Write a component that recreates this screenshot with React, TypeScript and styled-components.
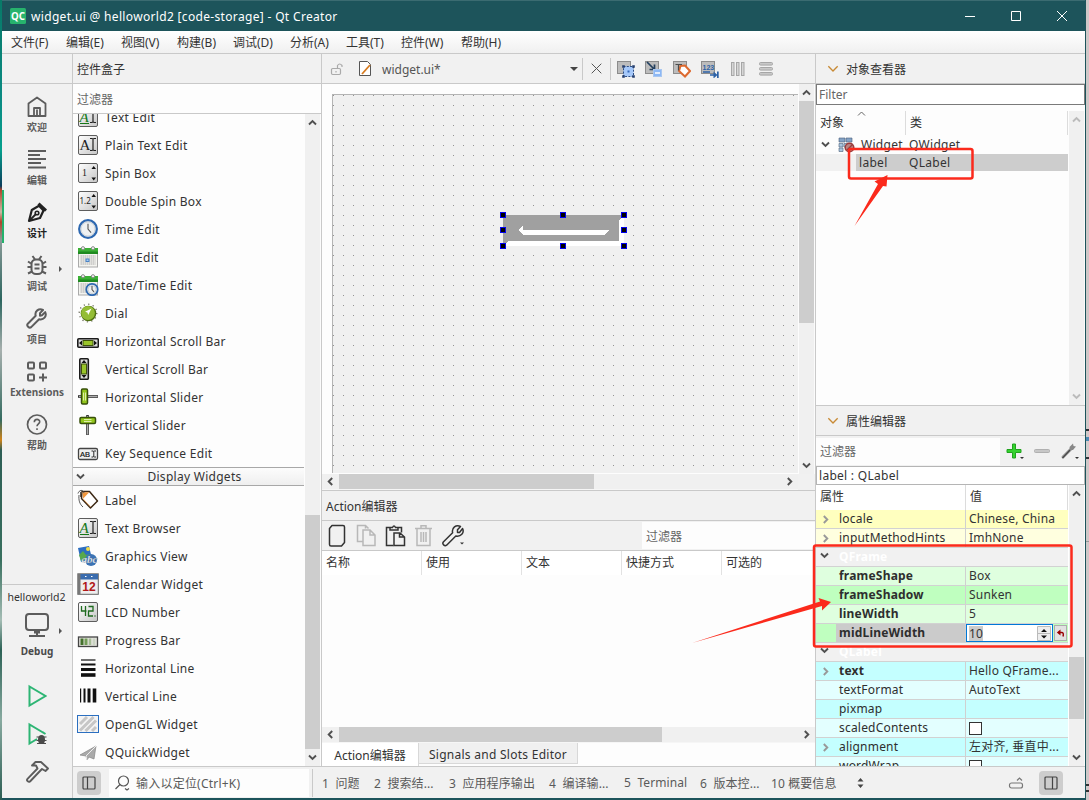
import React from "react";
import styled, { createGlobalStyle, css } from "styled-components";

const line = "#c9c9c9";
const panel = "#f1f1f1";
const paper = "#fdfdfd";

const Global = createGlobalStyle`
  * { box-sizing: border-box; }
  body { margin: 0; }
  body, input, button {
    font-family: "Noto Sans", "Noto Sans CJK SC", sans-serif;
    font-size: 12px;
    color: #333;
  }
  svg { display: block; flex: none; }
`;

const Desktop = styled.div`
  position: relative;
  width: 1089px;
  height: 800px;
  overflow: hidden;
  display: flex;
  white-space: pre;
  background: #c9c4c4;
`;
const DesktopLeft = styled.div`
  width: 2px;
  background: linear-gradient(#087a68 0, #0b8b83 100px, #06a08d 150px, #0b3d5c 186px, #b1442b 190px, #cbb9a4 212px, #b1442b 222px, #8a9a98 240px, #2c665f 300px, #a7b0ae 350px, #356b60 420px, #d18419 440px, #2d5e55 450px, #39705f 560px, #a5bdb5 620px, #2d6256 650px, #88aaa0 720px, #2c5d53 100%);
`;
const DesktopRight = styled.div`
  width: 3px;
  background: linear-gradient(#cfc8c8 0 429px, #2b3136 429px 431px, #cfc8c8 431px 437px, #4d8ab4 437px 441px, #d2cccc 441px 457px, #34363a 457px 459px, #cfc8c8 459px 541px, #999 541px 542px, #cfc8c8 542px 784px, #333 784px 786px, #cfc8c8 786px 790px, #333 790px 792px, #cfc8c8 792px);
`;
const Window = styled.div`
  width: 1084px;
  height: 800px;
  display: flex;
  flex-direction: column;
  background: ${panel};
  border-right: 1px solid #1d545b;
  border-bottom: 2px solid #1d545b;
`;
const TitleBar = styled.header`
  height: 31px;
  flex: none;
  background: #1d545b;
  border-top: 1px solid #3b6b71;
  color: #fff;
  display: flex;
  align-items: center;
  padding-left: 8px;
`;
const Title = styled.span`
  flex: 1;
  margin-left: 5px;
  font-size: 12px;
  letter-spacing: 0.33px;
`;
const WinButton = styled.span`
  width: 46px;
  display: flex;
  justify-content: center;
`;
const MenuBar = styled.nav`
  height: 23px;
  flex: none;
  display: flex;
  align-items: center;
  padding-left: 9px;
  background: linear-gradient(#fff, #f0f0f0);
  border-bottom: 1px solid ${line};
`;
const MenuItem = styled.span<{ $w: number }>`
  width: ${p => p.$w}px;
`;
const Body = styled.div`
  flex: 1;
  min-height: 0;
  display: flex;
`;
const ModeBar = styled.aside`
  width: 71px;
  flex: none;
  border-right: 1px solid ${line};
  display: flex;
  flex-direction: column;
`;
const ModeTop = styled.div`
  height: 30px;
  border-bottom: 1px solid ${line};
`;
const Mode = styled.div<{ $on?: boolean }>`
  position: relative;
  height: 53px;
  display: flex;
  flex-direction: column;
  align-items: center;
  padding-top: 11px;
  font-size: 10px;
  font-weight: 700;
  line-height: 14px;
  color: ${p => (p.$on ? "#222" : "#5c5c5c")};
  border-left: 2px solid ${p => (p.$on ? "#23b26d" : "transparent")};
  padding-right: 2px;
  svg { margin-bottom: 2px; }
`;
const ModeArrow = styled.i`
  position: absolute;
  right: 10px;
  top: 23px;
  border: 3.5px solid transparent;
  border-left-color: #555;
  border-right: 0;
`;
const Kit = styled.div`
  margin-top: auto;
  height: 214px;
  border-top: 1px solid ${line};
  display: flex;
  flex-direction: column;
  align-items: center;
  padding-top: 4px;
`;
const KitName = styled.div`
  font-size: 10.5px;
  line-height: 16px;
  padding-right: 1px;
`;
const KitTarget = styled.div`
  position: relative;
  width: 100%;
  height: 60px;
  display: flex;
  flex-direction: column;
  align-items: center;
  padding-top: 7px;
  font-size: 10px;
  font-weight: 700;
  line-height: 14px;
  color: #4a4a4a;
  svg { margin-bottom: 6px; }
`;
const KitActions = styled.div`
  display: flex;
  flex-direction: column;
  align-items: center;
  gap: 14px;
  padding-top: 19px;
`;
const Right = styled.div`
  flex: 1;
  min-width: 0;
  display: flex;
  flex-direction: column;
`;
const Docks = styled.div`
  height: 713px;
  flex: none;
  display: flex;
`;
const LeftDock = styled.section`
  width: 249px;
  display: flex;
  flex-direction: column;
  border-right: 1px solid ${line};
`;
const DockTitle = styled.div<{ $pad?: number }>`
  height: 30px;
  flex: none;
  border-bottom: 1px solid ${line};
  padding-left: ${p => p.$pad ?? 4}px;
  display: flex;
  align-items: center;
  gap: 7px;
`;
const FilterField = styled.div<{ $w?: number; $h: number }>`
  width: ${p => (p.$w ? p.$w + "px" : "auto")};
  height: ${p => p.$h}px;
  flex: none;
  background: ${paper};
  color: #666;
  display: flex;
  align-items: center;
  padding-left: 4px;
`;
const BoxArea = styled.div`
  flex: 1;
  min-height: 0;
  display: flex;
  border-top: 1px solid ${line};
  border-bottom: 1px solid ${line};
  background: ${panel};
`;
const BoxList = styled.div`
  width: 232px;
  overflow: hidden;
  background: ${paper};
`;
const Group = styled.div<{ $up?: number }>`
  margin-top: ${p => -(p.$up ?? 0)}px;
`;
const WidgetRow = styled.div`
  height: 28px;
  display: flex;
  align-items: center;
  padding-left: 4px;
  gap: 6px;
  letter-spacing: 0.28px;
`;
const IconCell = styled.span`
  width: 22px;
  height: 22px;
`;
const Category = styled.div`
  height: 19px;
  width: 231px;
  border-top: 1px solid #a8a8a8;
  border-bottom: 1px solid #a8a8a8;
  background: linear-gradient(#fcfcfc, #efefef);
  display: flex;
  align-items: center;
  padding-left: 3px;
  letter-spacing: 0.28px;
  span { flex: 1; text-align: center; }
`;
const VBar = styled.div`
  width: 16px;
  flex: none;
  display: flex;
  flex-direction: column;
  align-items: center;
  background: #f0f0f0;
  border-right: 1px solid #fbfbfb;
`;
const HBar = styled.div`
  height: 16px;
  flex: none;
  display: flex;
  align-items: center;
  background: #f0f0f0;
  border-bottom: 1px solid #f6f6f6;
`;
const Cap = styled.span`
  width: 17px;
  height: 17px;
  flex: none;
  display: flex;
  align-items: center;
  justify-content: center;
`;
const Track = styled.div<{ $before: number; $size: number; $h?: boolean }>`
  flex: 1;
  align-self: stretch;
  &::before {
    content: "";
    display: block;
    background: #cdcdcd;
    ${p => p.$h
      ? css`margin-left: ${p.$before}px; width: ${p.$size}px; height: 15px;`
      : css`margin-top: ${p.$before}px; height: ${p.$size}px;`}
  }
`;
const Center = styled.section`
  width: 494px;
  display: flex;
  flex-direction: column;
  border-right: 1px solid ${line};
`;
const EditorBar = styled.div`
  height: 30px;
  flex: none;
  border-bottom: 1px solid ${line};
  display: flex;
  align-items: center;
  padding-left: 7px;
`;
const FileName = styled.span`
  flex: 1;
  margin-left: 9px;
  padding-top: 1px;
  color: #555;
`;
const Down = styled.i`
  border: 4px solid transparent;
  border-top-color: #444;
  border-bottom: 0;
  margin-right: 4px;
`;
const Sep = styled.i`
  width: 1px;
  height: 22px;
  background: ${line};
`;
const CloseCell = styled.span`
  width: 27px;
  display: flex;
  justify-content: center;
`;
const DesignTools = styled.div`
  display: flex;
  gap: 10px;
  padding: 0 40px 0 6px;
`;
const CanvasRow = styled.div`
  height: 390px;
  flex: none;
  display: flex;
  background: ${paper};
`;
const FormArea = styled.div`
  width: 477px;
  height: 389px;
  padding: 10px 1px 0 10px;
`;
const Form = styled.div`
  position: relative;
  height: 379px;
  border-top: 1px solid #b4b4b4;
  border-left: 1px solid #b4b4b4;
  background: radial-gradient(circle at 0.5px 0.5px, #949494 0.6px, transparent 0.7px) 0 0 / 10px 10px #f0f0f0;
`;
const SelectedLabel = styled.div`
  position: absolute;
  left: 170px;
  top: 120px;
`;
const Handle = styled.i<{ $x: number; $y: number }>`
  position: absolute;
  left: ${p => p.$x}px;
  top: ${p => p.$y}px;
  width: 6px;
  height: 6px;
  background: #000;
  border: 1px solid #0000f0;
`;
const HBarRow = styled.div`
  display: flex;
  width: 476px;
  flex: none;
  flex-direction: column;
`;
const ActionTitle = styled(DockTitle)`
  border-top: 1px solid ${line};
  height: 31px;
`;
const ActionTools = styled.div`
  height: 30px;
  flex: none;
  border-bottom: 1px solid ${line};
  display: flex;
  align-items: center;
  justify-content: space-between;
`;
const ActionIcons = styled.div`
  display: flex;
  gap: 5px;
  padding-left: 4px;
`;
const Columns = styled.div`
  height: 24px;
  flex: none;
  display: flex;
  background: #fff;
`;
const Column = styled.span<{ $w: number }>`
  width: ${p => p.$w}px;
  padding-left: 4px;
  line-height: 23px;
  border-right: 1px solid #e2e2e2;
  &:last-child { border-right: 0; }
`;
const Blank = styled.div`
  flex: 1;
  background: ${paper};
`;
const Tabs = styled.div`
  height: 24px;
  flex: none;
  display: flex;
  border-bottom: 1px solid ${line};
  background: ${paper};
`;
const Tab = styled.span<{ $on?: boolean; $w: number }>`
  width: ${p => p.$w}px;
  height: ${p => (p.$on ? 23 : 21)}px;
  line-height: ${p => (p.$on ? 25 : 23)}px;
  text-align: center;
  letter-spacing: ${p => (p.$on ? 0 : 0.27)}px;
  background: ${p => (p.$on ? "#fff" : "#f0f0f0")};
  border-right: 1px solid #d8d8d8;
  border-bottom: ${p => (p.$on ? "0" : "1px solid #d8d8d8")};
`;
const RightDock = styled.section`
  width: 269px;
  display: flex;
  flex-direction: column;
  border-bottom: 1px solid ${line};
`;
const Outlined = styled.div<{ $c: string; $h: number; $hint?: boolean }>`
  height: ${p => p.$h}px;
  flex: none;
  border: 1px solid ${p => p.$c};
  background: #fff;
  color: ${p => (p.$hint ? "#666" : "#333")};
  padding-left: 2px;
  display: flex;
  align-items: center;
  letter-spacing: ${p => (p.$hint ? 0 : 0.28)}px;
`;
const Tree = styled.div`
  height: 301px;
  flex: none;
  display: flex;
  padding-top: 6px;
  background: ${paper};
  border-bottom: 1px solid ${line};
`;
const TreeBody = styled.div`
  width: 253px;
`;
const TreeHead = styled.div`
  position: relative;
  height: 24px;
  display: flex;
  line-height: 24px;
  svg { position: absolute; left: 41px; top: -2px; }
`;
const TreeCell = styled.span<{ $w: number; $rule?: boolean }>`
  width: ${p => p.$w}px;
  padding-left: 4px;
  border-right: 1px solid ${p => (p.$rule ? "#dcdcdc" : "transparent")};
`;
const TreeRow = styled.div<{ $h: number; $on?: boolean }>`
  height: ${p => p.$h}px;
  width: 252px;
  display: flex;
  align-items: center;
  padding-left: ${p => (p.$on ? 43 : 5)}px;
  letter-spacing: 0.3px;
  background: ${p => (p.$on ? "linear-gradient(90deg, #f1f1f1 40px, #cdcdcd 40px)" : "none")};
`;
const Name = styled.span<{ $w: number; $left?: number }>`
  width: ${p => p.$w}px;
  margin-left: ${p => p.$left ?? 0}px;
`;
const PropFilter = styled.div`
  height: 30px;
  flex: none;
  display: flex;
  align-items: center;
  justify-content: space-between;
`;
const PropTools = styled.div`
  display: flex;
  align-items: center;
  width: 80px;
  gap: 8px;
`;
const Props = styled.div`
  flex: 1;
  min-height: 0;
  display: flex;
  overflow: hidden;
`;
const PropTable = styled.div`
  width: 253px;
  border-right: 1px solid #fff;
  overflow: hidden;
`;
const PropHead = styled.div`
  height: 25px;
  display: flex;
  background: #fff;
  line-height: 24px;
`;
const PropRow = styled.div<{ $bg: string }>`
  height: 19px;
  display: flex;
  background: ${p => p.$bg};
  border-bottom: 1px solid #d2d2d2;
  letter-spacing: 0.2px;
`;
const PropName = styled.span<{ $bold?: boolean; $group?: boolean; $active?: boolean }>`
  width: 150px;
  flex: none;
  display: flex;
  align-items: center;
  line-height: 18px;
  font-weight: ${p => (p.$bold || p.$group ? 700 : 400)};
  color: ${p => (p.$group ? "#fff" : "#2e2e2e")};
  border-right: 1px solid ${p => (p.$group ? "transparent" : "#d0d0d0")};
  ${p => p.$active && css`background: linear-gradient(90deg, transparent 20px, #cbcbcb 20px);`}
`;
const Twist = styled.span<{ $up?: boolean }>`
  width: 23px;
  padding-left: ${p => (p.$up ? 4 : 5)}px;
  padding-bottom: ${p => (p.$up ? 4 : 0)}px;
`;
const PropValue = styled.span`
  flex: 1;
  padding-left: 3px;
  display: flex;
  align-items: center;
  line-height: 18px;
`;
const Check = styled.i`
  width: 13px;
  height: 13px;
  background: #fff;
  border: 1px solid #333;
`;
const Spin = styled.span`
  width: 87px;
  height: 18px;
  margin-left: -3px;
  background: #fff;
  border: 1px solid #0078d7;
  display: flex;
  align-items: center;
  justify-content: space-between;
  padding: 0 1px 0 2px;
  b { font-weight: 400; background: #cbcbcb; line-height: 15px; }
`;
const Reset = styled.span`
  width: 13px;
  height: 16px;
  margin-left: 1px;
  border: 1px solid #adadad;
  background: #e2e2e2;
  display: flex;
  align-items: center;
  justify-content: center;
`;
const StatusBar = styled.footer`
  flex: 1;
  display: flex;
  align-items: center;
  color: #5a5a5a;
  padding-left: 4px;
`;
const Toggle = styled.span`
  width: 24px;
  height: 24px;
  border-radius: 4px;
  background: #cdcdcd;
  display: flex;
  align-items: center;
  justify-content: center;
`;
const Locator = styled.div`
  width: 200px;
  height: 28px;
  margin-left: 8px;
  background: ${paper};
  display: flex;
  align-items: center;
  padding-left: 5px;
  gap: 5px;
  letter-spacing: 0.22px;
`;
const Outputs = styled.div`
  margin-left: 3px;
  border-left: 1px solid ${line};
  padding-left: 9px;
  width: 557px;
  height: 28px;
  display: flex;
  align-items: center;
`;
const Output = styled.span<{ $w: number }>`
  width: ${p => p.$w}px;
  flex: none;
  letter-spacing: 0.1px;
`;
const StatusEnd = styled.div`
  margin-left: auto;
  margin-right: 22px;
  display: flex;
  align-items: center;
  gap: 15px;
`;
const Overlay = styled.svg`
  position: absolute;
  left: 0;
  top: 0;
  pointer-events: none;
`;

const Chevron = ({ dir, color = "#505050", thin = false, s = 9 }: { dir: "up" | "down" | "left" | "right"; color?: string; thin?: boolean; s?: number }) => {
  const d = { up: "M1 6.5 4.5 3 8 6.5", down: "M1 2.5 4.5 6 8 2.5", left: "M6.2 1 2.7 4.5 6.2 8", right: "M2.8 1 6.3 4.5 2.8 8" }[dir];
  return <svg width={s} height={s} viewBox="0 0 9 9" fill="none" stroke={color} strokeWidth={thin ? 1 : 1.9}><path d={d} /></svg>;
};

const VScroll = ({ before, size, off }: { before: number; size: number; off?: boolean }) => (
  <VBar>
    <Cap><Chevron dir="up" color={off ? "#bbb" : "#505050"} /></Cap>
    <Track $before={before} $size={size} />
    <Cap><Chevron dir="down" color={off ? "#bbb" : "#505050"} /></Cap>
  </VBar>
);
const HScroll = ({ size }: { size: number }) => (
  <HBar>
    <Cap><Chevron dir="left" /></Cap>
    <Track $h $before={0} $size={size} />
    <Cap><Chevron dir="right" /></Cap>
  </HBar>
);

const modeIcons: Record<string, React.ReactNode> = {
  home: <path d="M2.500 8 11 2l8.500 6v12.500h-17ZM8 20v-7.500h6V20M11 14v6" strokeLinejoin="round" strokeWidth="1.800" />,
  edit: <path d="M2 2.500h18M2 6.500h12M2 10.500h18M2 14.500h13M2 19h18" strokeWidth="1.800" />,
  pen: <g><path d="M3 19.500 5.800 8.500 13 4.300 17.500 9 14 16.500Z" strokeWidth="2.200" strokeLinejoin="round" /><path d="M12.500 2.200 20 9.200" strokeWidth="3" /><path d="M3 19.500 10 12.500" strokeWidth="1.800" /><circle cx="11" cy="11.500" r="1.800" strokeWidth="1.600" /></g>,
  bug: <g><rect x="5.500" y="5" width="11" height="14.500" rx="4.500" /><path d="M8.500 10h5M8.500 14h5M2 7l3 2M20 7l-3 2M1.500 12.500h4M16.500 12.500h4M2 19l4-2M20 19l-4-2M6.500 1.500 9 5M15.500 1.500 13 5" /></g>,
  wrench: <path d="M14 8.200V5.600L17 2.500C12.800.3 8.400 3.700 9.700 8.300L1.800 16.200c-1.700 1.900 1.400 5 3.400 3.400l7.900-7.900c4.600 1.200 8-3 6.100-7.100L16 7.800Z" strokeLinejoin="round" />,
  ext: <g><rect x="2" y="2" width="6" height="6" rx="1" /><rect x="14" y="2" width="6" height="6" rx="1" /><rect x="2" y="14" width="6" height="6" rx="1" /><path d="M17 13v8M13 17h8" /></g>,
  help: <g><circle cx="11" cy="11" r="9.500" strokeWidth="1.700" /><path d="M8.300 8.800c0-4 5.600-3.600 5.400-.4-.2 2-2.700 2-2.700 4.400M11 14.800v1.800" strokeWidth="1.600" /></g>,
};
const modes: [string, string][] = [["home", "欢迎"], ["edit", "编辑"], ["pen", "设计"], ["bug", "调试"], ["wrench", "项目"], ["ext", "Extensions"], ["help", "帮助"]];

const Tile = ({ children }: { children?: React.ReactNode }) => (
  <g><rect x="1.500" y="1.500" width="19" height="19" rx="1.500" fill="url(#tile)" stroke="#5d5d5d" />{children}</g>
);
const Cal = () => (
  <g>
    <rect x="1.500" y="3" width="19" height="18" fill="#f4f4f0" stroke="#aaa" />
    <path d="M1 2h20v6H1z" fill="#3bb035" /><path d="M1 5.500h20V8H1z" fill="#1f8a20" />
    <circle cx="6" cy="2.200" r="1.600" fill="#eee" stroke="#777" strokeWidth=".8" /><circle cx="16" cy="2.200" r="1.600" fill="#eee" stroke="#777" strokeWidth=".8" />
    <path d="M3.500 10h15M3.500 12h15M3.500 14h15M3.500 16h15M3.500 18h15" stroke="#a2a2a2" strokeWidth="1.200" strokeDasharray="1.400 .6" />
  </g>
);
const Clock = ({ x, y, r }: { x: number; y: number; r: number }) => (
  <g>
    <circle cx={x} cy={y} r={r} fill="#eef1f2" stroke="#2d68b0" strokeWidth={r > 7 ? 2.3 : 1.8} />
    <circle cx={x} cy={y} r={r - 1.7} fill="none" stroke="#c4ccd2" strokeWidth=".9" />
    <path d={`M${x} ${y - r * 0.6}V${y}l${r * 0.35} ${r * 0.4}`} fill="none" stroke="#555" strokeWidth="1.100" />
  </g>
);
const Glyph = ({ x, y, size, fill, serif, children }: { x: number; y: number; size: number; fill: string; serif?: boolean; children: string }) => (
  <text x={x} y={y} fontSize={size} fill={fill} fontFamily={serif ? "Liberation Serif" : "Noto Sans"} letterSpacing="0">{children}</text>
);
const AI = ({ green }: { green?: boolean }) => (
  <Tile>
    <text x="2.500" y="15.500" fontSize="15" fontStyle={green ? "italic" : "normal"} fill={green ? "#167818" : "#222"} fontFamily="Liberation Serif">A</text>
    <path d="M13 4.500h2l1 .7 1-.7h2M16 5v11M13 16.500h2l1-.7 1 .7h2" stroke="#222" strokeWidth="1.200" fill="none" />
    {green && <path d="M3 17.500h9" stroke="#167818" />}
  </Tile>
);
const Spinners = () => <path d="m14.500 7 2.200-3L19 7ZM14.500 15.500l2.200 3 2.300-3Z" fill="#111" />;

const widgetIcons: Record<string, React.ReactNode> = {
  textedit: <AI green />,
  plain: <AI />,
  spin: <Tile><Glyph x={5} y={14} size={10} fill="#222" serif>1</Glyph><Spinners /></Tile>,
  dspin: <Tile><Glyph x={2.5} y={14} size={8} fill="#222">1.2</Glyph><Spinners /></Tile>,
  time: <Clock x={11} y={11} r={8.8} />,
  date: <g><Cal /><rect x="9" y="13" width="3" height="2.500" fill="#a9cdf2" stroke="#3b7bc4" strokeWidth=".9" /></g>,
  datetime: <g><Cal /><Clock x={15} y={15.5} r={5.7} /></g>,
  dial: <g><circle cx="11" cy="11" r="8.800" fill="none" stroke="#6a6a5a" strokeWidth="1.300" strokeDasharray="1.200 3.400" /><circle cx="11.500" cy="11.500" r="7.800" fill="#4f7010" /><circle cx="11" cy="11" r="6.900" fill="#94bd35" /><path d="m14.500 6.500-6.500 3.200 2.400.8.800 2.600Z" fill="#fff" /></g>,
  hscroll: <g><rect x=".8" y="8.800" width="20.500" height="8.500" rx="1" fill="#dcdcdc" stroke="#1c1c1c" strokeWidth="1.600" /><rect x="6" y="10.500" width="10" height="5" fill="#9ac52b" stroke="#3d520b" /><path d="m5 10.500-3 2.500L5 15.500ZM17 10.500l3 2.500-3 2.500Z" fill="#111" /></g>,
  vscroll: <g><rect x="2.800" y=".8" width="8.500" height="20.500" rx="1" fill="#dcdcdc" stroke="#1c1c1c" strokeWidth="1.600" /><rect x="4.500" y="6" width="5" height="10" fill="#9ac52b" stroke="#3d520b" /><path d="m4.500 5 2.500-3L9.500 5ZM4.500 17 7 20l2.500-3Z" fill="#111" /></g>,
  hslider: <g><path d="M1 10.500h20" stroke="#333" strokeWidth="2.600" /><path d="M2 10.500h18.500" stroke="#ccc" strokeWidth=".8" /><rect x="4.500" y="3" width="6" height="15" rx="1.200" fill="#93c71c" stroke="#38500b" strokeWidth="1.500" /><path d="M6.600 6.500v8M8.600 6.500v8" stroke="#e6f4b8" /></g>,
  vslider: <g><path d="M10.500 1v20" stroke="#333" strokeWidth="2.600" /><path d="M10.500 2v18.500" stroke="#ccc" strokeWidth=".8" /><rect x="3" y="3.500" width="15.500" height="6" rx="1.200" fill="#93c71c" stroke="#38500b" strokeWidth="1.500" /><path d="M7 5.600h7.500M7 7.600h7.500" stroke="#e6f4b8" /></g>,
  key: <g><rect x="1.500" y="6.500" width="19" height="11" rx="1.500" fill="#efefef" stroke="#444" strokeWidth="1.300" /><text x="3" y="14.800" fontSize="7.500" letterSpacing="0" fill="#111" stroke="#111" strokeWidth=".2" fontFamily="Liberation Sans">AB</text><path d="M14.500 9h1.500l.8.500.7-.5H19M16.800 9.500v5M14.500 15H16l.8-.5.7.5H19" stroke="#111" fill="none" strokeWidth=".9" /></g>,
  label: <g><path d="M5 2.500h7.500l8 9.500-7 7L4.500 9.500Z" fill="#fff" stroke="#3c2815" strokeWidth="1.500" strokeLinejoin="round" /><path d="M5.500 3.200h6.700L6 9.800Z" fill="#f0963c" /><path d="m6 9.800 7.500 8" stroke="#e8ae72" /><path d="M1 4.500C2 1 6 0 7 4M3.500 3v5M2 6c-.5 5 .5 9 4 12" fill="none" stroke="#444" strokeWidth=".9" /></g>,
  graphics: <g><path d="m1 3 11-2 3 13-11 3Z" fill="#2d6ec0" /><path d="m2 10 4-4 3 4 4-1 1 4-10 3Z" fill="#58a84c" /><circle cx="11" cy="4" r="2" fill="#f0dc4a" /><circle cx="14" cy="15" r="6" fill="#3b73b4" /><text x="4.500" y="17.500" fontSize="11" letterSpacing="0" fontStyle="italic" fontWeight="700" fill="#e8eef4" stroke="#567" strokeWidth=".2" fontFamily="Liberation Serif">abc</text></g>,
  calendar: <g><rect x=".8" y=".8" width="20.500" height="20.500" fill="#eee" stroke="#666" /><path d="M3 1h18v5.500H3z" fill="#3a6cae" /><path d="M1 1h2.500v20H1z" fill="#777" /><path d="M8 3.500h1.500M14 3.500h1.500" stroke="#fff" /><text x="5.300" y="18" fontSize="12" letterSpacing="0" fontWeight="700" fill="#b01818" fontFamily="Liberation Sans">12</text></g>,
  lcd: <Tile><path d="M4.500 5v5h5M8.500 5v10M11.500 5.500h4.500V10h-4.500v5H16M17.500 15h1" stroke="#1e6a1e" strokeWidth="1.300" fill="none" /></Tile>,
  progress: <g><rect x="1.500" y="8" width="19" height="9.500" fill="#e2e2dc" stroke="#444" strokeWidth="1.300" /><path d="M5 9.500V16" stroke="#44712c" strokeWidth="3" /><path d="M9 9.500V16" stroke="#739c58" strokeWidth="3" /><path d="M13 9.500V16" stroke="#a5bd95" strokeWidth="2.500" /><path d="M17 9.500V16" stroke="#c9d3c2" strokeWidth="2.500" /></g>,
  hline: <g stroke="#111"><path d="M4 3h14.500" strokeWidth="1.200" /><path d="M4 7.500h14.500" strokeWidth="2" /><path d="M4 12.500h14.500" strokeWidth="3" /><path d="M4 18h14.500" strokeWidth="3.600" /></g>,
  vline: <g stroke="#111"><path d="M3.600 3.500v14" strokeWidth="1.200" /><path d="M7.500 3.500v14" strokeWidth="2" /><path d="M12 3.500v14" strokeWidth="3" /><path d="M17.500 3.500v14" strokeWidth="3.600" /></g>,
  opengl: <g><rect x=".5" y="2.500" width="21" height="17" fill="#f4f4f4" stroke="#2b6fc0" /><path d="m3 11 7-7M3 17.500 16.500 4M8.500 18 19 7.500M15 18l4-4" stroke="#c6c6c6" strokeWidth="3" /></g>,
  quick: <g><path d="m3 14 16-9-2 13-5-2-2 3-1-4Z" fill="#aaa" stroke="#858585" strokeWidth=".7" /><path d="m19 5-10 10 1 4" fill="none" stroke="#eee" /></g>,
};

const inputs: [string, string][] = [
  ["textedit", "Text Edit"], ["plain", "Plain Text Edit"], ["spin", "Spin Box"], ["dspin", "Double Spin Box"], ["time", "Time Edit"], ["date", "Date Edit"],
  ["datetime", "Date/Time Edit"], ["dial", "Dial"], ["hscroll", "Horizontal Scroll Bar"], ["vscroll", "Vertical Scroll Bar"], ["hslider", "Horizontal Slider"], ["vslider", "Vertical Slider"], ["key", "Key Sequence Edit"],
];
const displays: [string, string][] = [
  ["label", "Label"], ["textedit", "Text Browser"], ["graphics", "Graphics View"], ["calendar", "Calendar Widget"], ["lcd", "LCD Number"], ["progress", "Progress Bar"],
  ["hline", "Horizontal Line"], ["vline", "Vertical Line"], ["opengl", "OpenGL Widget"], ["quick", "QQuickWidget"],
];
const WidgetItem = ({ icon, name }: { icon: string; name: string }) => (
  <WidgetRow><IconCell><svg width="22" height="22">{widgetIcons[icon]}</svg></IconCell>{name}</WidgetRow>
);

const Base = () => <rect x=".5" y="1.500" width="13" height="12" fill="#bcbcbc" stroke="#8c8c8c" />;
const designIcons = [
  <g><Base /><rect x="6.500" y="6.500" width="10" height="10" fill="#a5c8fa" /><path d="M6.500 6.500h10v10h-10Z" fill="none" stroke="#2b4d86" strokeDasharray="2 1.300" /><path d="M5.200 5.200h2.600v2.600H5.200zM15.200 5.200h2.600v2.600h-2.600zM5.200 15.200h2.600v2.600H5.200zM15.200 15.200h2.600v2.600h-2.600z" fill="#263f6e" /><path d="M10.500 10.500h2v2h-2z" fill="#3569b9" /></g>,
  <g><Base /><path d="m2 2 7 7M9.500 4.500v5h-5" stroke="#23405f" strokeWidth="1.700" fill="none" /><rect x="8.500" y="9.500" width="8" height="7" fill="#8db8f5" stroke="#a9c7f0" /><path d="M10 13h5" stroke="#fff" strokeWidth="1.500" /></g>,
  <g><Base /><path d="m7.500 6 4.500-.5 5 5.500-5 5.500-6-5.500Z" fill="#fff" stroke="#dd6a30" strokeWidth="2" /><path d="M2.500 4.500H9M5.500 4.500v6" stroke="#4d4d4d" strokeWidth="1.200" /></g>,
  <g><Base /><text x="1.500" y="9.500" fontSize="7" fontWeight="700" fill="#2d62a6" fontFamily="Liberation Sans">123</text><path d="M2 12h7M9 15h5" stroke="#2d62a6" strokeWidth="1.500" fill="none" /><path d="m12.500 11.500 4 3.500-4 3.500ZM16 11.500h1.700v7H16z" fill="#2d62a6" /></g>,
  <g fill="#d6d6d6" stroke="#a6a6a6"><rect x="2.500" y="2.500" width="2.500" height="13" /><rect x="7.500" y="2.500" width="2.500" height="13" /><rect x="12.500" y="2.500" width="2.500" height="13" /></g>,
  <g fill="#c8c8c8" stroke="#a6a6a6"><rect x="2.500" y="2.500" width="13" height="2.600" rx="1" /><rect x="2.500" y="7.500" width="13" height="2.600" rx="1" /><rect x="2.500" y="12.500" width="13" height="2.600" rx="1" /></g>,
];

type Prop = { n: string; v?: React.ReactNode; bg: string; bold?: boolean; group?: boolean; tw?: boolean; active?: boolean };
const props: Prop[] = [
  { n: "locale", v: "Chinese, China", bg: "#ffffbf", tw: true },
  { n: "inputMethodHints", v: "ImhNone", bg: "#ffffdf", tw: true },
  { n: "QFrame", bg: panel, group: true },
  { n: "frameShape", v: "Box", bg: "#dfffdf", bold: true },
  { n: "frameShadow", v: "Sunken", bg: "#bfffbf", bold: true },
  { n: "lineWidth", v: "5", bg: "#dfffdf", bold: true },
  { n: "midLineWidth", bg: "#bfffbf", bold: true, active: true },
  { n: "QLabel", bg: panel, group: true },
  { n: "text", v: "Hello QFrame...", bg: "#c4ffff", bold: true, tw: true },
  { n: "textFormat", v: "AutoText", bg: "#e3ffff" },
  { n: "pixmap", v: "", bg: "#c4ffff" },
  { n: "scaledContents", v: <Check />, bg: "#e3ffff" },
  { n: "alignment", v: "左对齐, 垂直中...", bg: "#c4ffff", tw: true },
  { n: "wordWrap", v: <Check />, bg: "#e3ffff" },
];

const handles = [[-3, -3], [57, -3], [118, -3], [-3, 12], [118, 12], [-3, 28], [57, 28], [118, 28]];
const menus: [string, number][] = [["文件(F)", 55], ["编辑(E)", 55], ["视图(V)", 56], ["构建(B)", 56], ["调试(D)", 57], ["分析(A)", 56], ["工具(T)", 55], ["控件(W)", 60], ["帮助(H)", 50]];
const outputs: [string, number][] = [["1  问题", 52], ["2  搜索结...", 75], ["3  应用程序输出", 100], ["4  编译输...", 75], ["5  Terminal", 76], ["6  版本控...", 71], ["10 概要信息", 85]];

export default function App() {
  return (
    <Desktop>
      <Global />
      <svg width="0" height="0" style={{ position: "absolute" }}>
        <defs><linearGradient id="tile" x1="0" y1="0" x2="1" y2="1"><stop stopColor="#fff" /><stop offset="1" stopColor="#c6c6c6" /></linearGradient></defs>
      </svg>
      <DesktopLeft />
      <Window>
        <TitleBar>
          <svg width="16" height="16"><rect width="16" height="16" rx="1.500" fill="#27b36d" /><text x="1" y="12" fontSize="10.500" fontWeight="700" fill="#fff" fontFamily="Noto Sans" textLength="14" lengthAdjust="spacingAndGlyphs">QC</text></svg>
          <Title>widget.ui @ helloworld2 [code-storage] - Qt Creator</Title>
          <WinButton><svg width="10" height="10"><path d="M0 5.500h10" stroke="#fff" /></svg></WinButton>
          <WinButton><svg width="10" height="10"><path d="M.5.5h9v9h-9z" stroke="#fff" fill="none" /></svg></WinButton>
          <WinButton><svg width="10" height="10"><path d="m0 0 10 10M10 0 0 10" stroke="#fff" /></svg></WinButton>
        </TitleBar>
        <MenuBar>{menus.map(([m, w]) => <MenuItem key={m} $w={w}>{m}</MenuItem>)}</MenuBar>
        <Body>
          <ModeBar>
            <ModeTop />
            {modes.map(([icon, name]) => (
              <Mode key={name} $on={icon === "pen"}>
                <svg width="22" height="23" viewBox="0 0 22 22" fill="none" stroke={icon === "pen" ? "#222" : "#5c5c5c"} strokeWidth="2">{modeIcons[icon]}</svg>
                {name}
                {icon === "bug" && <ModeArrow />}
              </Mode>
            ))}
            <Kit>
              <KitName>helloworld2</KitName>
              <KitTarget>
                <svg width="26" height="26" fill="none" stroke="#5c5c5c" strokeWidth="2"><rect x="2" y="2" width="22" height="16" rx="3" /><path d="M13 18v6M5 24h16" /><path d="M10 20h6" strokeWidth="3" /></svg>
                Debug
                <ModeArrow />
              </KitTarget>
              <KitActions>
                <svg width="20" height="24" fill="none" stroke="#2db574" strokeWidth="2"><path d="M2.500 2.500 18.500 12 2.500 21.500Z" /></svg>
                <svg width="20" height="24" fill="none" stroke="#2db574" strokeWidth="2"><path d="m18.500 12-16-9.500v19l7.500-4.500M18.500 12l-3-1.800" /><ellipse cx="14.500" cy="17.500" rx="3.500" ry="4.500" fill="#4a4a4a" stroke="none" /><path d="M9.500 15h10M9.500 18.500h10M10 21.500h9" stroke="#4a4a4a" strokeWidth="1.100" /></svg>
                <svg width="24" height="24" fill="none" stroke="#5c5c5c" strokeWidth="1.900" strokeLinejoin="round"><path d="M7 5.500 10.500 2h5.500l7 6.500-2.500 2.500-3.500-2-2 2L5 21.500c-1.500 1-4-1-2.500-2.700L12.500 8.500 11 5.500Z" /></svg>
              </KitActions>
            </Kit>
          </ModeBar>
          <Right>
            <Docks>
              <LeftDock>
                <DockTitle>控件盒子</DockTitle>
                <FilterField $h={29}>过滤器</FilterField>
                <BoxArea>
                  <BoxList>
                    <Group $up={11}>{inputs.map(([i, n]) => <WidgetItem key={n} icon={i} name={n} />)}</Group>
                    <Category><Chevron dir="down" /><span>Display Widgets</span></Category>
                    <Group>{displays.map(([i, n]) => <WidgetItem key={n} icon={i} name={n} />)}</Group>
                  </BoxList>
                  <VScroll before={384} size={234} />
                </BoxArea>
              </LeftDock>
              <Center>
                <EditorBar>
                  <svg width="16" height="16" fill="none" stroke="#aaa" strokeWidth="1.200"><rect x="2.500" y="7.500" width="9" height="6" rx="1.200" /><path d="M8.500 7V4.500q2-3 4.500 0V6M7 10v1.500" /></svg>
                  <svg width="16" height="17" style={{ marginLeft: 12 }}><path d="M2.500 1.500h8l3 3v11h-11Z" fill="#fff" stroke="#555" /><path d="m5 14 8-9" stroke="#d77a1e" strokeWidth="1.800" /></svg>
                  <FileName>widget.ui*</FileName>
                  <Down /><Sep />
                  <CloseCell><svg width="11" height="11"><path d="m.7.700 9.600 9.600M10.300.700.700 10.300" stroke="#555" /></svg></CloseCell>
                  <Sep />
                  <DesignTools>{designIcons.map((d, i) => <svg key={i} width="18" height="18">{d}</svg>)}</DesignTools>
                </EditorBar>
                <CanvasRow>
                  <FormArea>
                    <Form>
                      <SelectedLabel>
                        <svg width="121" height="31" shapeRendering="crispEdges"><path d="M0 0h121v31H0z" fill="#a0a0a0" /><path d="M121 0v31H0l5-5h111V5ZM15 15l5-5v5h86l-4 5H20Z" fill="#fff" /></svg>
                        {handles.map(([x, y]) => <Handle key={`${x},${y}`} $x={x} $y={y} />)}
                      </SelectedLabel>
                    </Form>
                  </FormArea>
                  <VScroll before={0} size={222} />
                </CanvasRow>
                <HBarRow><HScroll size={255} /></HBarRow>
                <ActionTitle>Action编辑器</ActionTitle>
                <ActionTools>
                  <ActionIcons>
                    <svg width="24" height="24" fill="none" stroke="#333" strokeWidth="1.500"><path d="M6 1.500h11q1.500 0 1.500 1.500v15.500l-3 3.500H5q-1.500 0-1.500-1.500v-16Z" strokeLinejoin="round" /></svg>
                    <svg width="24" height="24" fill="none" stroke="#b8b8b8" strokeWidth="1.500"><path d="M8 17.500H2.500v-16h8l3 3M10.500 1.500v3" /><path d="M8 6h7l5 5v10.500H8ZM15 6v5h5" /></svg>
                    <svg width="24" height="24" fill="none" stroke="#333" strokeWidth="1.500"><path d="M9.500 21.500H2.500v-18h4M13 3.500h4.500v5M6 6V3.500h2.500q1.500-3 3 0H14V6Z" /><path d="M10 9h6l4.500 4v8.500H10ZM15.500 9v4h5" /></svg>
                    <svg width="24" height="24" fill="none" stroke="#b8b8b8" strokeWidth="1.500"><path d="M2 4.500h17M8 4V1.700h5V4M4 5v16.500h13V5M8 8v10M10.500 8v10M13 8v10" /></svg>
                    <svg width="24" height="24" fill="none" stroke="#333" strokeWidth="1.500"><path d="M15.500 8.500V5.800L18.500 2.500C14 0 9.500 4 10.600 8.700L1.300 18c-1.500 2 1.300 4.700 3.300 3.200l9.200-9.200c5 1 8.800-3 6.800-7.500L17.500 8.500Z" strokeLinejoin="round" /><path d="M18 18.500h4l-2 2Z" fill="#333" stroke="none" /></svg>
                  </ActionIcons>
                  <FilterField $h={27} $w={173}>过滤器</FilterField>
                </ActionTools>
                <Columns>{["名称", "使用", "文本", "快捷方式", "可选的"].map((c, i) => <Column key={c} $w={i === 4 ? 93 : 100}>{c}</Column>)}</Columns>
                <Blank />
                <HScroll size={323} />
                <Tabs><Tab $on $w={97}>Action编辑器</Tab><Tab $w={159}>Signals and Slots Editor</Tab></Tabs>
              </Center>
              <RightDock>
                <DockTitle $pad={11}><Chevron dir="down" color="#c88a35" thin s={12} />对象查看器</DockTitle>
                <Outlined $c="#7a7a7a" $h={21} $hint>Filter</Outlined>
                <Tree>
                  <TreeBody>
                    <TreeHead><TreeCell $w={90} $rule>对象</TreeCell><TreeCell $w={162} $rule>类</TreeCell><Chevron dir="up" color="#666" thin /></TreeHead>
                    <TreeRow $h={19}>
                      <Chevron dir="down" />
                      <svg width="17" height="16" style={{ marginLeft: 8 }}><path d="M1 1h6v4H1zM8 1h6v4H8z" fill="#84a3c6" stroke="#4a6078" strokeWidth=".6" /><path d="M1 6.500h4V10H1zM6 6.500h8V10H6zM1 11h4v3.500H1z" fill="#a9c4dd" stroke="#4a6078" strokeWidth=".6" /><circle cx="11.500" cy="10.500" r="4.300" fill="#b98583" stroke="#9b3c3c" strokeWidth="1.500" /><path d="m8.700 13.300 5.600-5.600" stroke="#9b3c3c" strokeWidth="1.300" /></svg>
                      <Name $w={48} $left={6}>Widget</Name><span>QWidget</span>
                    </TreeRow>
                    <TreeRow $h={17} $on><Name $w={50}>label</Name><span>QLabel</span></TreeRow>
                  </TreeBody>
                  <VScroll before={0} size={0} off />
                </Tree>
                <DockTitle $pad={11}><Chevron dir="down" color="#c88a35" thin s={12} />属性编辑器</DockTitle>
                <PropFilter>
                  <FilterField $h={27} $w={184}>过滤器</FilterField>
                  <PropTools>
                    <svg width="20" height="20"><path d="M7.500 3h3v5.500H16v3h-5.500V17h-3v-5.500H2v-3h5.500Z" fill="#35d22f" stroke="#20a31e" /><path d="M15 16h4l-2 2Z" fill="#333" /></svg>
                    <svg width="18" height="20"><rect x="1.500" y="8.500" width="15" height="3" rx="1" fill="#c7c7c7" stroke="#b0b0b0" /></svg>
                    <svg width="20" height="20"><path d="m4 16 8-8" stroke="#9a9a9a" strokeWidth="3" strokeLinecap="round" /><path d="m3.500 17 7.500-8" stroke="#4a4a4a" strokeWidth="1.300" /><path d="m11 9-.5-3 3.500-3.500.5 2.500 2.500.5-3 3.500Z" fill="#888" /><path d="M16 16h4l-2 2Z" fill="#333" /></svg>
                  </PropTools>
                </PropFilter>
                <Outlined $c="#b5b5b5" $h={19}>label : QLabel</Outlined>
                <Props>
                  <PropTable>
                    <PropHead><TreeCell $w={150} $rule>属性</TreeCell><TreeCell $w={102} $rule>值</TreeCell></PropHead>
                    {props.map(p => (
                      <PropRow key={p.n} $bg={p.bg}>
                        <PropName $bold={p.bold} $group={p.group} $active={p.active}>
                          <Twist $up={p.group}>{p.group && <Chevron dir="down" />}{p.tw && <Chevron dir="right" color="#999" />}</Twist>{p.n}
                        </PropName>
                        {p.active ? (
                          <PropValue>
                            <Spin><b>10</b><svg width="14" height="15"><path d="M.5.500h13v14H.5zM1 7.500h12" fill="#eee" stroke="#bbb" /><path d="m4 6 3-3 3 3ZM4 9.500l3 3 3-3Z" fill="#111" /></svg></Spin>
                            <Reset><svg width="9" height="9"><path d="M4.500.500v6L.800 3.500Z" fill="#900" /><path d="M4 3.500h2q2 .2 1 4" stroke="#900" strokeWidth="1.400" fill="none" /></svg></Reset>
                          </PropValue>
                        ) : <PropValue>{p.v}</PropValue>}
                      </PropRow>
                    ))}
                  </PropTable>
                  <VScroll before={155} size={62} />
                </Props>
              </RightDock>
            </Docks>
            <StatusBar>
              <Toggle><svg width="14" height="14" fill="none" stroke="#444" strokeWidth="1.200"><rect x="1" y="1" width="12" height="12" rx="1" /><path d="M5.500 1v12" /></svg></Toggle>
              <Locator>
                <svg width="17" height="18" fill="none" stroke="#555" strokeWidth="1.200"><circle cx="9.500" cy="7" r="5" /><path d="M6 10.500 1.500 15M11 14.500l2 1.500 2-1.500" /></svg>
                输入以定位(Ctrl+K)
              </Locator>
              <Outputs>
                {outputs.map(([o, w]) => <Output key={o} $w={w}>{o}</Output>)}
                <svg width="9" height="12"><path d="m1.500 4.500 3-3.500 3 3.500ZM1.500 7.500l3 3.500 3-3.500Z" fill="#444" /></svg>
              </Outputs>
              <StatusEnd>
                <svg width="16" height="14" fill="none" stroke="#777" strokeWidth="1.200"><rect x="1.500" y="7" width="13" height="5" rx="2" /><path d="m9 4.500 2.500-2.500L14 4.500" /></svg>
                <Toggle><svg width="14" height="14" fill="none" stroke="#444" strokeWidth="1.200"><rect x="1" y="1" width="12" height="12" rx="1" /><path d="M8.500 1v12" /></svg></Toggle>
              </StatusEnd>
            </StatusBar>
          </Right>
        </Body>
      </Window>
      <DesktopRight />
      <Overlay width="1089" height="800">
        <rect x="849" y="149" width="123.500" height="29.500" rx="2" fill="none" stroke="#fb2a1c" strokeWidth="2.500" />
        <rect x="814" y="545.500" width="257.500" height="101" rx="2" fill="none" stroke="#fb2a1c" strokeWidth="2.500" />
        <path d="M854.500 226 878 184l-3.500-2.500L887.500 175l-1 11.500-3.500-.5ZM692 643l128-41.500-1.500-3.500 12.500 4-9 8.500v-4.500Z" fill="#fb2a1c" />
      </Overlay>
    </Desktop>
  );
}
